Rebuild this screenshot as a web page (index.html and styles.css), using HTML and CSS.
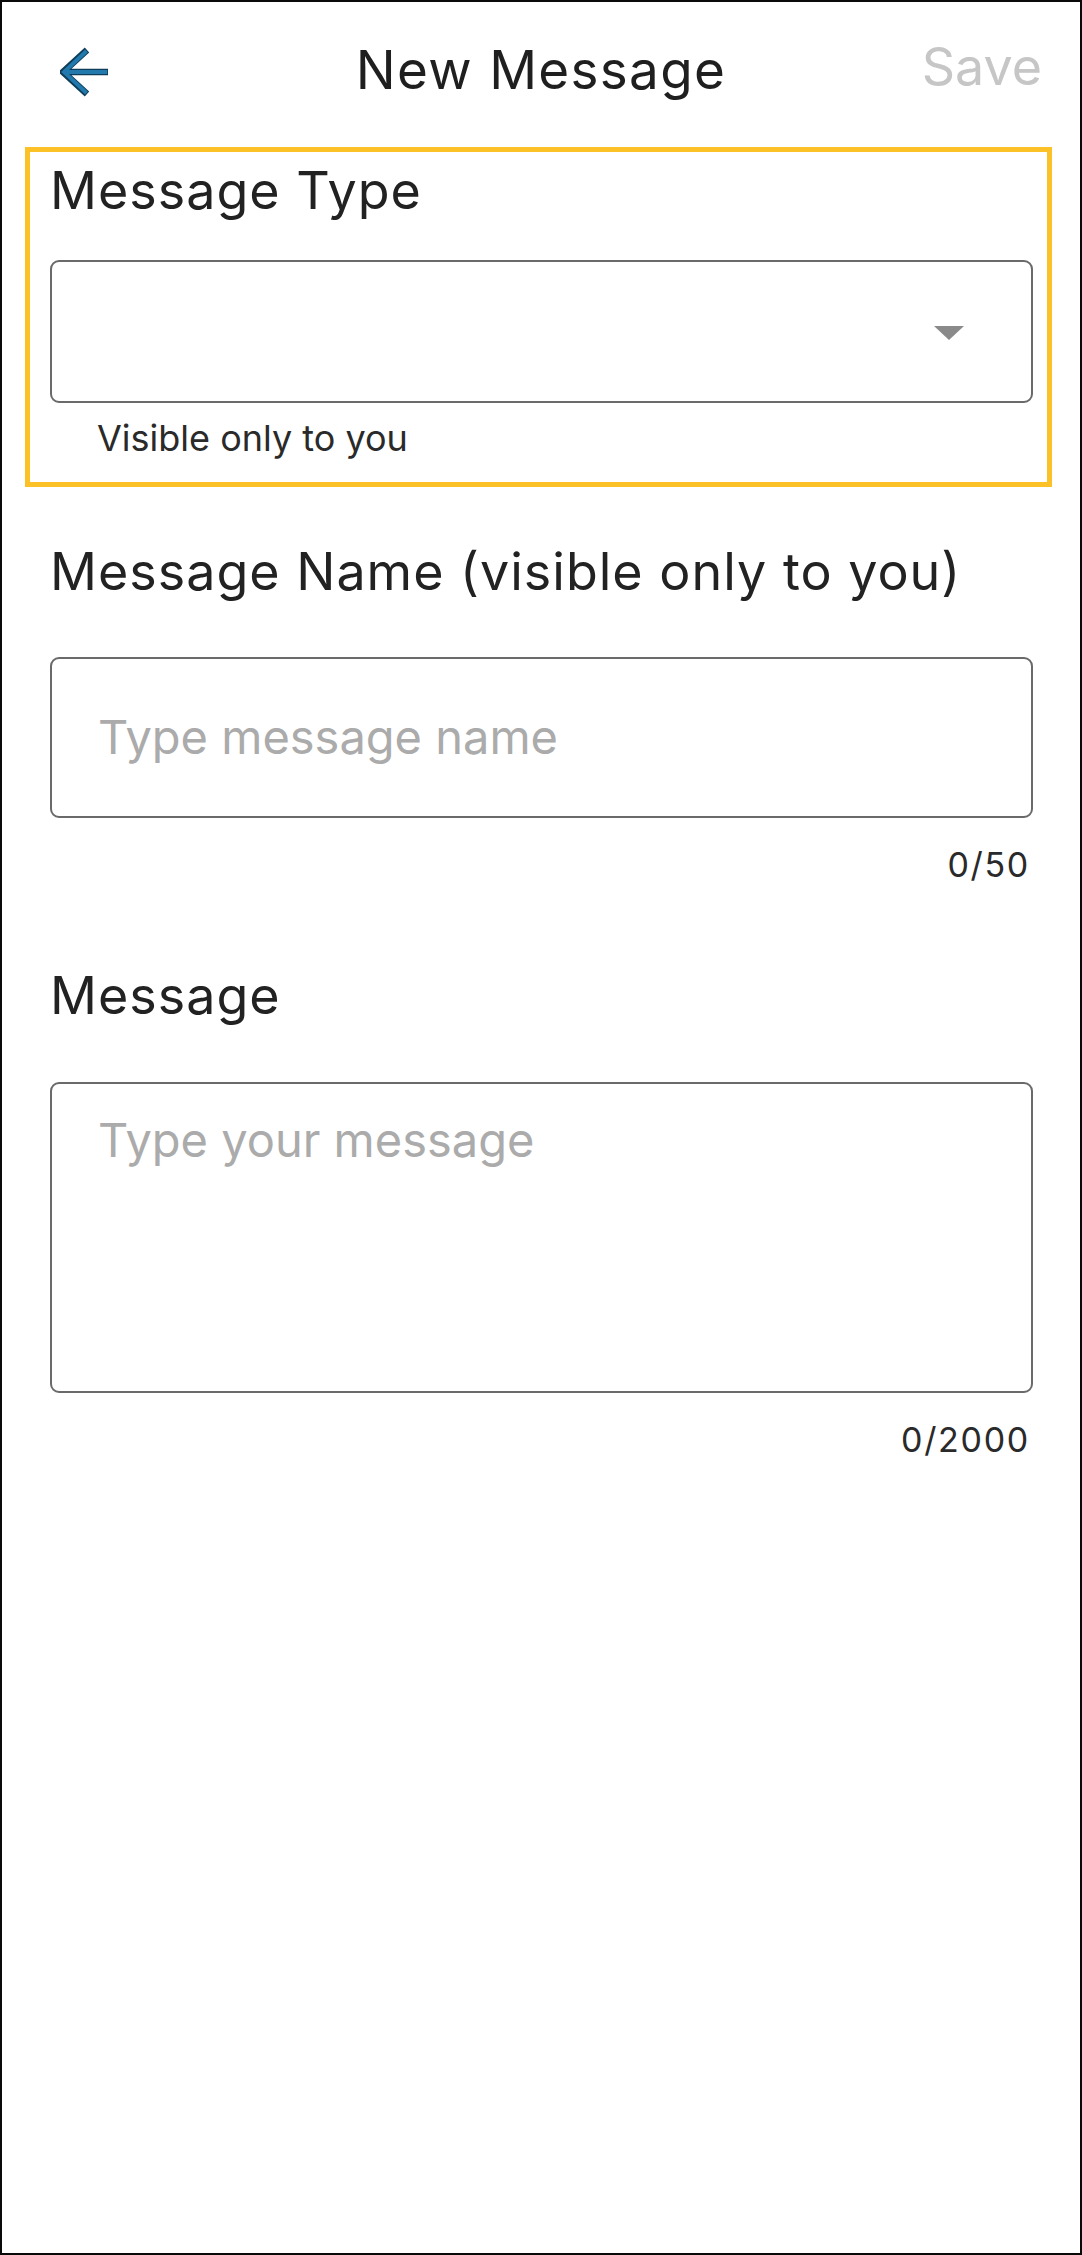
FILE: index.html
```html
<!DOCTYPE html>
<html lang="en">
<head>
<meta charset="utf-8">
<title>New Message</title>
<link rel="stylesheet" href="styles.css">
</head>
<body>
<div class="screen">
  <header class="topbar">
    <button class="back" aria-label="Back">
      <svg width="50" height="50" viewBox="0 0 50 50" aria-hidden="true">
        <path d="M48 25 H3 M27 3 L3 25 L27 47" fill="none" stroke="#0f3d58" stroke-width="6.5" stroke-linecap="butt" stroke-linejoin="miter"/>
        <path d="M47.2 25 H4 M26.5 4 L4 25 L26.5 46" fill="none" stroke="#2179ad" stroke-width="3.8" stroke-linecap="butt" stroke-linejoin="miter"/>
      </svg>
    </button>
    <h1 class="title">New Message</h1>
    <span class="save">Save</span>
  </header>

  <main class="form">
    <section class="field highlight">
      <label class="label">Message Type</label>
      <div class="select">
        <span class="caret"></span>
      </div>
      <p class="helper">Visible only to you</p>
    </section>

    <section class="field name-field">
      <label class="label">Message Name (visible only to you)</label>
      <div class="input name-input"><span class="placeholder">Type message name</span></div>
      <p class="counter">0/50</p>
    </section>

    <section class="field message-field">
      <label class="label">Message</label>
      <div class="input textarea"><span class="placeholder">Type your message</span></div>
      <p class="counter">0/2000</p>
    </section>
  </main>
</div>
</body>
</html>
```

FILE: styles.css
```css
* { box-sizing: border-box; }

html, body {
  margin: 0;
  padding: 0;
  background: #ffffff;
}

body {
  font-family: "Inter", "Lato", "Liberation Sans", sans-serif;
  color: #222222;
}

.screen {
  height: 100vh;
  border: 2px solid #0a0a0a;
  background: #ffffff;
}

.topbar {
  height: 145px;
  display: grid;
  grid-template-columns: 1fr auto 1fr;
  align-items: center;
  padding: 0 38px 8px 38px;
}

.back {
  justify-self: start;
  display: flex;
  padding: 0;
  margin: 2px 0 0 20px;
  border: 0;
  background: none;
}

.title {
  margin: 0;
  font-size: 53px;
  line-height: 1.2;
  font-weight: 400;
  letter-spacing: 1.3px;
  color: #1f1f1f;
}

.save {
  justify-self: end;
  font-size: 52px;
  line-height: 1.2;
  color: #c6c6c6;
  margin-bottom: 7px;
}

.form {
  padding: 0 47px 0 48px;
}

.field {
  display: flex;
  flex-direction: column;
}

.label {
  font-size: 52px;
  line-height: 1.2;
  letter-spacing: 1px;
  color: #222222;
}

.highlight {
  margin: 0 -19px 0 -25px;
  padding: 8px 14px 21px 20px;
  border: 5px solid #fcc127;
}

.select {
  margin-top: 38px;
  height: 143px;
  border: 2px solid #6a6a6a;
  border-radius: 9px;
  display: flex;
  align-items: center;
  justify-content: flex-end;
  padding-right: 67px;
}

.caret {
  width: 0;
  height: 0;
  border-left: 15.5px solid transparent;
  border-right: 15.5px solid transparent;
  border-top: 14px solid #8a8a8a;
  margin-top: 3px;
}

.helper {
  margin: 14px 0 0 47px;
  font-size: 36px;
  line-height: 1.2;
  color: #2a2a2a;
}

.name-field {
  margin-top: 54px;
}

.message-field {
  margin-top: 79px;
}

.input {
  border: 2px solid #6a6a6a;
  border-radius: 9px;
  display: flex;
  padding-left: 46px;
}

.name-input {
  margin-top: 54px;
  height: 161px;
  align-items: center;
}

.textarea {
  margin-top: 55px;
  height: 311px;
  align-items: flex-start;
  padding-top: 28px;
}

.placeholder {
  font-size: 47px;
  line-height: 1.2;
  color: #ababab;
}

.counter {
  margin: 27px 0 0 0;
  padding-right: 3px;
  text-align: right;
  font-size: 34px;
  line-height: 1.2;
  letter-spacing: 1.7px;
  color: #2a2a2a;
}
```
